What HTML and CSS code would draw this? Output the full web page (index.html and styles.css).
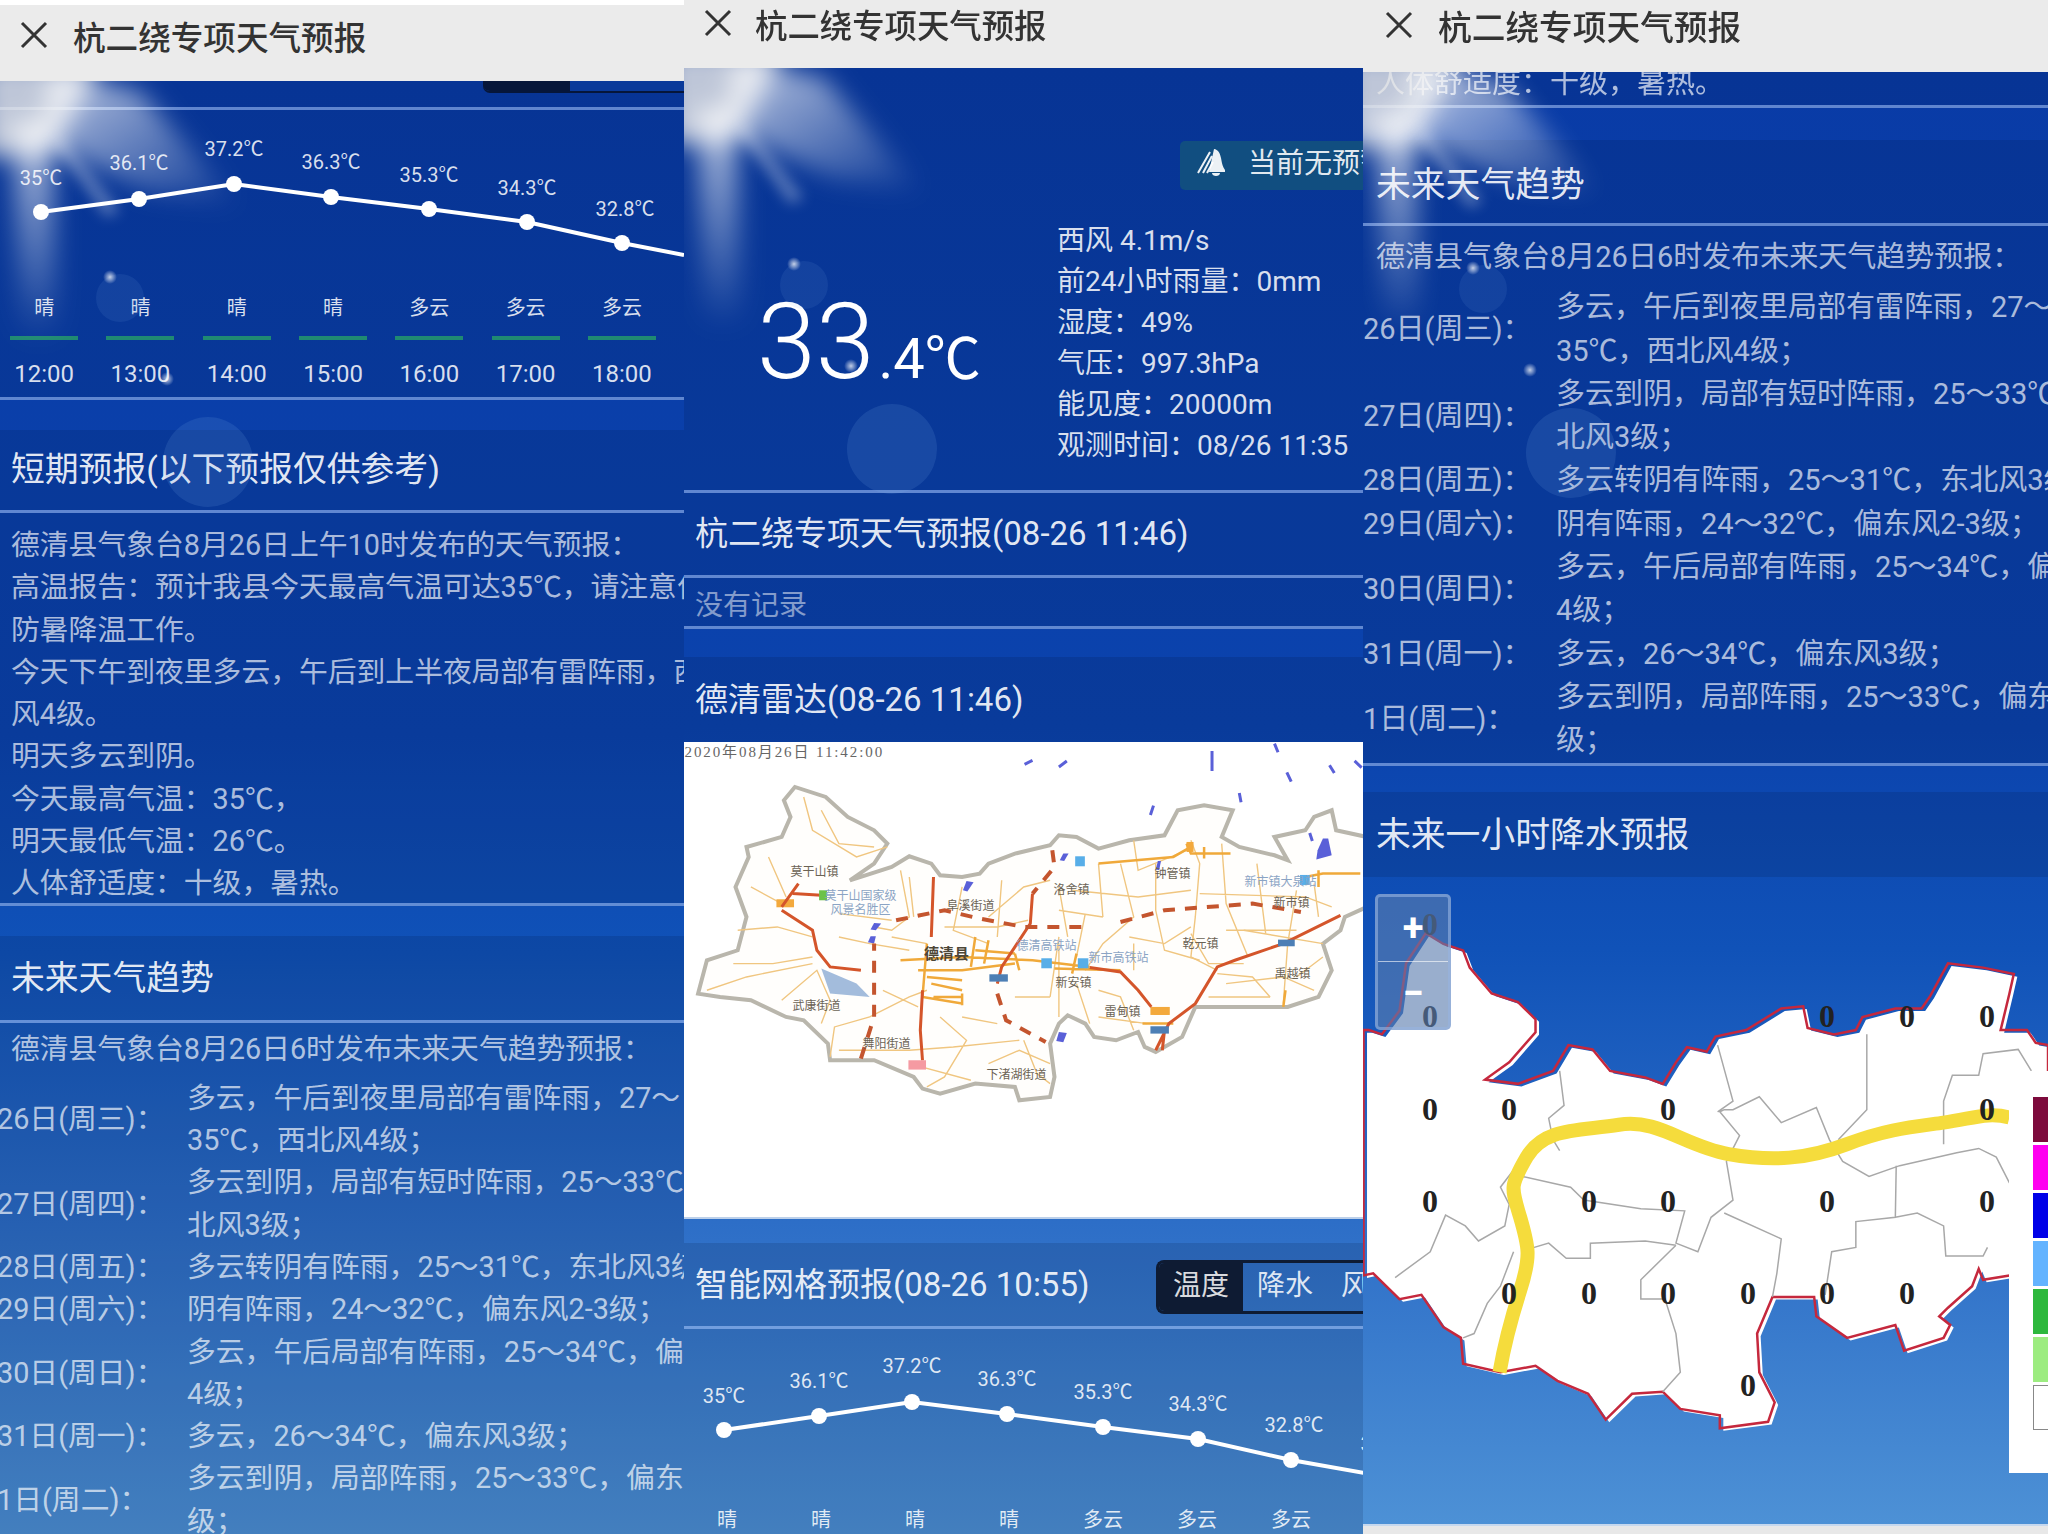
FILE: index.html
```html
<!DOCTYPE html>
<html lang="zh-CN">
<head>
    <meta charset="UTF-8">
    <title>杭二绕专项天气预报</title>
    <link rel="stylesheet" href="styles.css">
</head>
<body>
    <svg class="defs" width="0" height="0">
        <defs>
            <filter id="soft" x="-40%" y="-40%" width="180%" height="180%"><feGaussianBlur stdDeviation="12"/></filter>
            <filter id="softer" x="-40%" y="-40%" width="180%" height="180%"><feGaussianBlur stdDeviation="7"/></filter>
            <linearGradient id="rayDown" x1="0" y1="0" x2="0" y2="1">
                <stop offset="0" stop-color="#fff" stop-opacity=".7"/>
                <stop offset="1" stop-color="#fff" stop-opacity="0"/>
            </linearGradient>
            <linearGradient id="rayRight" x1="0" y1="0" x2="1" y2="1">
                <stop offset="0" stop-color="#fff" stop-opacity=".75"/>
                <stop offset="1" stop-color="#fff" stop-opacity="0"/>
            </linearGradient>
            <symbol id="flare" viewBox="0 0 300 320">
                <g filter="url(#soft)">
                    <polygon points="-20,-20 100,-20 80,22 50,75 -20,75" fill="#e6e6e6" opacity=".82"/>
                    <polygon points="50,-10 140,10 240,125 150,110 40,60" fill="url(#rayRight)"/>
                    <polygon points="12,40 52,40 58,260 20,260" fill="url(#rayDown)"/>
                </g>
                <g filter="url(#softer)" opacity=".3">
                    <polygon points="50,60 62,54 120,130 106,136" fill="#fff"/>
                </g>
            </symbol>
        </defs>
    </svg>

    <div class="screens">

        <!-- 左：滚动到预报 -->
        <section class="panel p1">
            <header class="topbar">
                <svg class="close" viewBox="0 0 30 30"><path d="M3 3 27 27M27 3 3 27"/></svg>
                <span>杭二绕专项天气预报</span>
            </header>
            <div class="content">
                <div class="fx">
                    <svg class="flare"><use href="#flare"/></svg>
                    <i class="bubble big"></i><i class="bubble small"></i><i class="dot d1"></i><i class="dot d2"></i>
                </div>
                <div class="sec stub-row">
                    <div class="stub"><i></i></div>
                </div>
                <div class="sec chart">
                    <svg class="curve" width="684" height="170">
                        <polyline points="41,102 139,89 234,74 331,87 429,99 527,112 622,133 684,145"/>
                        <circle cx="41" cy="102" r="8"/><circle cx="139" cy="89" r="8"/><circle cx="234" cy="74" r="8"/><circle cx="331" cy="87" r="8"/><circle cx="429" cy="99" r="8"/><circle cx="527" cy="112" r="8"/><circle cx="622" cy="133" r="8"/>
                        <text x="41" y="75">35℃</text><text x="139" y="60">36.1℃</text><text x="234" y="46">37.2℃</text><text x="331" y="59">36.3℃</text><text x="429" y="72">35.3℃</text><text x="527" y="85">34.3℃</text><text x="625" y="106">32.8℃</text>
                    </svg>
                    <div class="hours">
                        <div class="hour"><span>晴</span><i></i><b>12:00</b></div>
                        <div class="hour"><span>晴</span><i></i><b>13:00</b></div>
                        <div class="hour"><span>晴</span><i></i><b>14:00</b></div>
                        <div class="hour"><span>晴</span><i></i><b>15:00</b></div>
                        <div class="hour"><span>多云</span><i></i><b>16:00</b></div>
                        <div class="hour"><span>多云</span><i></i><b>17:00</b></div>
                        <div class="hour"><span>多云</span><i></i><b>18:00</b></div>
                    </div>
                </div>
                <div class="band"></div>
                <div class="sec title">短期预报(以下预报仅供参考)</div>
                <div class="sec text short">
                    德清县气象台8月26日上午10时发布的天气预报：<br>
                    高温报告：预计我县今天最高气温可达35℃，请注意作好<br>
                    防暑降温工作。<br>
                    今天下午到夜里多云，午后到上半夜局部有雷阵雨，西北<br>
                    风4级。<br>
                    明天多云到阴。<br>
                    今天最高气温：35℃，<br>
                    明天最低气温：26℃。<br>
                    人体舒适度：十级，暑热。
                </div>
                <div class="band"></div>
                <div class="sec title trend">未来天气趋势</div>
                <div class="sec text long">
                    <p>德清县气象台8月26日6时发布未来天气趋势预报：</p>
                    <div class="days">
                        <span>26日(周三)：</span><div>多云，午后到夜里局部有雷阵雨，27～<br>35℃，西北风4级；</div>
                        <span>27日(周四)：</span><div>多云到阴，局部有短时阵雨，25～33℃，西<br>北风3级；</div>
                        <span>28日(周五)：</span><div>多云转阴有阵雨，25～31℃，东北风3级；</div>
                        <span>29日(周六)：</span><div>阴有阵雨，24～32℃，偏东风2-3级；</div>
                        <span>30日(周日)：</span><div>多云，午后局部有阵雨，25～34℃，偏东风<br>4级；</div>
                        <span>31日(周一)：</span><div>多云，26～34℃，偏东风3级；</div>
                        <span>1日(周二)：</span><div>多云到阴，局部阵雨，25～33℃，偏东风3<br>级；</div>
                    </div>
                </div>
            </div>
        </section>

        <!-- 中：实况 + 雷达 -->
        <section class="panel p2">
            <header class="topbar">
                <svg class="close" viewBox="0 0 30 30"><path d="M3 3 27 27M27 3 3 27"/></svg>
                <span>杭二绕专项天气预报</span>
            </header>
            <div class="content">
                <div class="fx">
                    <svg class="flare"><use href="#flare"/></svg>
                    <i class="bubble big"></i><i class="bubble small"></i><i class="dot d1"></i><i class="dot d2"></i>
                </div>
                <div class="sec hero">
                    <div class="alert">
                        <svg viewBox="0 0 32 32"><path class="bell" d="M19 4c4 .5 6 4 7 9 1 6 2 9 4 12v2H14z"/><path class="bell" d="M17 28h8c0 4-8 4-8 0z"/><path class="slash" d="M3 28 15 7M8 28 17 11M12 28 18 17"/></svg>
                        <span>当前无预警</span>
                    </div>
                    <div class="now">
                        <div class="temp">33<small>.4℃</small></div>
                        <div class="facts">
                            西风 4.1m/s<br>
                            前24小时雨量：0mm<br>
                            湿度：49%<br>
                            气压：997.3hPa<br>
                            能见度：20000m<br>
                            观测时间：08/26 11:35
                        </div>
                    </div>
                </div>
                <div class="sec title road">杭二绕专项天气预报(08-26 11:46)</div>
                <div class="sec none">没有记录</div>
                <div class="band"></div>
                <div class="sec title radar">德清雷达(08-26 11:46)</div>
                <div class="radar-map">
                    <svg width="680" height="475" viewBox="3.5 11.7 680 475">
                        <g transform="scale(.44 .3333)">
                            <polygon class="county" points="40,790 60,690 130,660 150,560 125,470 155,380 150,350 230,320 250,260 235,210 260,170 330,200 380,260 440,300 470,340 440,400 385,450 480,410 520,378 570,400 590,435 640,440 680,430 700,400 760,370 840,345 860,315 900,320 950,355 1020,330 1100,315 1130,240 1190,225 1255,240 1230,320 1270,350 1350,375 1380,390 1350,320 1420,300 1440,260 1480,240 1490,300 1560,320 1560,530 1510,560 1500,600 1460,640 1480,720 1450,800 1380,830 1210,830 1170,830 1140,920 1080,965 1055,950 1040,905 990,930 940,920 920,880 880,855 860,880 840,940 850,1040 840,1100 770,1110 760,1070 670,1060 590,1090 550,1075 530,1040 440,990 340,990 335,940 280,870 240,860 160,810 90,800"/>
                            <polygon class="lake" points="320,715 400,760 430,800 340,790"/>
                            <g class="minor">
                                <path d="M280 200 300 300 400 380 470 350M320 240 360 340 440 350M160 470 230 520M200 380 240 500M120 700 210 700 300 680M60 780 150 740 300 700M230 810 310 720 340 810 320 880M130 600 220 590 300 620"/>
                                <path d="M500 420 520 560 480 600 440 590M360 550 480 570M520 440 530 560M640 470 620 600 700 640M730 450 720 620M700 560 780 470 840 450M600 590 720 590 790 570M480 620 560 640M360 620 430 640 520 660"/>
                                <path d="M860 470 880 620M860 620 840 800M920 550 900 680M1000 400 1030 560 960 640 920 720M1030 330 1040 420 1150 360M1160 330 1180 400 1170 560 1160 680 1220 720M950 400 960 560M890 480 1040 500 1160 480M860 540 960 560M1030 640 1030 720"/>
                                <path d="M1230 340 1240 520 1290 680M1310 400 1330 610M1400 480 1380 640 1370 820M1440 460 1450 560M1080 400 1080 540 1100 660 1180 690M1020 620 1100 640 1160 590M1180 490 1420 500 1480 530M1240 600 1400 600M1240 760 1370 740 1440 780M1200 800 1340 800"/>
                                <path d="M340 980 350 890 430 860 520 800 560 780M360 960 520 960 620 950 770 930M590 860 650 930 600 1040 560 1070M700 1000 770 960 840 1000M780 930 810 1030 840 1060M520 1000 660 1050M460 780 540 830M640 860 720 880M760 800 840 800"/>
                                <path d="M900 760 930 880M860 640 860 860M950 780 1000 800 1030 900M1220 730 1300 740 1340 800M1400 740 1460 680M1280 600 1460 640M1160 610 1200 700 1280 700M950 860 1060 880"/>
                            </g>
                            <g class="echo">
                                <path d="M782 102 800 90M860 110 878 92M1208 62V122M1350 40 1358 66M1378 126 1388 154M1475 105 1486 128M1532 92 1548 112M1270 188 1274 216M1075 226 1068 254M1430 308 1436 332"/>
                                <polygon points="1460,325 1472,325 1480,375 1445,388 1448,360"/>
                                <polygon points="870,370 882,370 872,392 862,390"/>
                                <polygon points="650,452 666,456 652,484 642,480"/>
                                <polygon points="440,578 456,580 444,600 432,598"/>
                                <polygon points="432,618 444,618 440,640 426,636"/>
                                <polygon points="860,905 878,908 870,936 854,932"/>
                                <polygon points="1085,392 1092,392 1088,420 1080,418"/>
                            </g>
                            <g class="main">
                                <path d="M500 690 640 680 800 690 930 710M540 720 640 720 760 700M560 640 550 800 640 820M570 760 640 780M575 800H640M640 790V825M670 620 660 710M700 630 690 700M760 670 770 720M900 670 890 730M850 715 1000 720M1150 340 1160 370 1250 370M1160 350 1120 380 950 400M1450 420 1450 470M1420 440 1460 430 1545 430"/>
                                <path d="M1075 850H1110M1050 880H1120M1375 780 1370 830M230 520H255M1190 350 1190 385M560 740 640 750M670 660 760 670"/>
                            </g>
                            <rect class="town" x="218" y="507" width="40" height="24"/>
                            <rect class="town" x="1068" y="830" width="44" height="24"/>
                            <rect class="town" x="1150" y="335" width="16" height="30"/>
                            <g class="red">
                                <path d="M230 530 268 460M255 490 320 495M230 540 300 600 310 660 340 710 410 720M800 490 795 580 730 710 720 760"/>
                                <path d="M1500 555 1370 640 1260 690 1220 710 1170 820 1110 880 1080 960M1095 960 1100 900"/>
                                <path d="M575 440 570 620M550 780 545 900 550 990M930 712 1000 725 1040 780 1070 830"/>
                            </g>
                            <g class="dash">
                                <path d="M410 985 440 860 440 640M490 570 600 540 680 565 780 590 920 590M1000 575 1100 540 1300 520 1410 545M845 360 850 410 800 490M720 790 740 870 830 935"/>
                            </g>
                            <rect class="shield" x="702" y="732" width="42" height="22"/>
                            <rect class="shield" x="1358" y="628" width="38" height="20"/>
                            <rect class="shield" x="1068" y="888" width="42" height="22"/>
                            <rect class="toll" x="518" y="990" width="40" height="28"/>
                            <rect class="station" x="897" y="378" width="22" height="30"/>
                            <rect class="station" x="820" y="684" width="24" height="30"/>
                            <rect class="station" x="903" y="684" width="24" height="30"/>
                            <rect class="station" x="1408" y="434" width="22" height="30"/>
                            <rect class="park" x="315" y="480" width="18" height="30"/>
                        </g>
                        <text class="stamp" x="4" y="27">2020年08月26日 11:42:00</text>
                        <g class="place">
                            <text x="134" y="146">莫干山镇</text>
                            <text x="180" y="170" class="blue">莫干山国家级</text>
                            <text x="180" y="184" class="blue">风景名胜区</text>
                            <text x="290" y="180">阜溪街道</text>
                            <text x="391" y="164">洛舍镇</text>
                            <text x="492" y="148">钟管镇</text>
                            <text x="600" y="156" class="blue">新市镇大泉站</text>
                            <text x="611" y="177">新市镇</text>
                            <text x="520" y="218">乾元镇</text>
                            <text x="612" y="248">禹越镇</text>
                            <text x="366" y="220" class="blue">德清高铁站</text>
                            <text x="438" y="232" class="blue">新市高铁站</text>
                            <text x="393" y="257">新安镇</text>
                            <text x="442" y="286">雷甸镇</text>
                            <text x="136" y="280">武康街道</text>
                            <text x="206" y="318">舞阳街道</text>
                            <text x="336" y="349">下渚湖街道</text>
                            <text class="city" x="266" y="229">德清县</text>
                        </g>
                    </svg>
                </div>
                <div class="band thin"></div>
                <div class="sec title grid-title">
                    <span>智能网格预报(08-26 10:55)</span>
                    <div class="toggle"><span class="on">温度</span><span>降水</span><span>风力</span></div>
                </div>
                <div class="sec chart">
                    <svg class="curve" width="680" height="163">
                        <polyline points="40,101 135,87 228,73 323,85 419,98 514,110 607,131 680,144"/>
                        <circle cx="40" cy="101" r="8"/><circle cx="135" cy="87" r="8"/><circle cx="228" cy="73" r="8"/><circle cx="323" cy="85" r="8"/><circle cx="419" cy="98" r="8"/><circle cx="514" cy="110" r="8"/><circle cx="607" cy="131" r="8"/>
                        <text x="40" y="74">35℃</text><text x="135" y="59">36.1℃</text><text x="228" y="44">37.2℃</text><text x="323" y="57">36.3℃</text><text x="419" y="70">35.3℃</text><text x="514" y="82">34.3℃</text><text x="610" y="103">32.8℃</text><text x="706" y="122">31.6℃</text>
                    </svg>
                    <div class="hours">
                        <div class="hour"><span>晴</span></div>
                        <div class="hour"><span>晴</span></div>
                        <div class="hour"><span>晴</span></div>
                        <div class="hour"><span>晴</span></div>
                        <div class="hour"><span>多云</span></div>
                        <div class="hour"><span>多云</span></div>
                        <div class="hour"><span>多云</span></div>
                    </div>
                </div>
            </div>
        </section>

        <!-- 右：趋势 + 降水图 -->
        <section class="panel p3">
            <header class="topbar">
                <svg class="close" viewBox="0 0 30 30"><path d="M3 3 27 27M27 3 3 27"/></svg>
                <span>杭二绕专项天气预报</span>
            </header>
            <div class="content">
                <div class="fx">
                    <svg class="flare"><use href="#flare"/></svg>
                    <i class="bubble big"></i><i class="bubble small"></i><i class="dot d1"></i><i class="dot d2"></i>
                </div>
                <div class="sec cut"><span>人体舒适度：十级，暑热。</span></div>
                <div class="band"></div>
                <div class="sec title">未来天气趋势</div>
                <div class="sec text long">
                    <p>德清县气象台8月26日6时发布未来天气趋势预报：</p>
                    <div class="days">
                        <span>26日(周三)：</span><div>多云，午后到夜里局部有雷阵雨，27～<br>35℃，西北风4级；</div>
                        <span>27日(周四)：</span><div>多云到阴，局部有短时阵雨，25～33℃，西<br>北风3级；</div>
                        <span>28日(周五)：</span><div>多云转阴有阵雨，25～31℃，东北风3级；</div>
                        <span>29日(周六)：</span><div>阴有阵雨，24～32℃，偏东风2-3级；</div>
                        <span>30日(周日)：</span><div>多云，午后局部有阵雨，25～34℃，偏东风<br>4级；</div>
                        <span>31日(周一)：</span><div>多云，26～34℃，偏东风3级；</div>
                        <span>1日(周二)：</span><div>多云到阴，局部阵雨，25～33℃，偏东风3<br>级；</div>
                    </div>
                </div>
                <div class="band tail"></div>
                <div class="sec title rain-title">未来一小时降水预报</div>
                <div class="rain-map">
                    <svg width="685" height="647">
                        <g transform="translate(-3 -17) scale(.4388 .4305)">
                            <polygon class="land-under" points="8,395 20,395 50,405 90,350 105,240 150,170 190,195 235,210 250,250 300,310 360,330 400,370 400,400 340,470 285,510 360,520 440,490 475,430 530,440 570,490 650,505 690,520 720,470 745,435 790,445 810,410 880,395 960,345 1010,340 1020,390 1080,405 1130,395 1145,365 1220,345 1280,345 1300,315 1340,240 1420,250 1490,265 1480,310 1460,395 1520,395 1540,425 1568,430 1568,960 1480,965 1420,975 1410,950 1395,990 1340,1040 1320,1060 1345,1080 1330,1110 1240,1140 1220,1080 1110,1110 1040,1060 1035,1015 940,1015 905,1100 910,1190 945,1260 930,1305 820,1320 820,1290 730,1275 690,1235 620,1240 560,1300 520,1240 450,1210 400,1175 320,1190 235,1170 230,1110 190,1085 140,1010 90,1020 30,960 8,965"/>
                            <polygon class="land" points="8,395 20,395 50,405 90,350 105,240 150,170 190,195 235,210 250,250 300,310 360,330 400,370 400,400 340,470 285,510 360,520 440,490 475,430 530,440 570,490 650,505 690,520 720,470 745,435 790,445 810,410 880,395 960,345 1010,340 1020,390 1080,405 1130,395 1145,365 1220,345 1280,345 1300,315 1340,240 1420,250 1490,265 1480,310 1460,395 1520,395 1540,425 1568,430 1568,960 1480,965 1420,975 1410,950 1395,990 1340,1040 1320,1060 1345,1080 1330,1110 1240,1140 1220,1080 1110,1110 1040,1060 1035,1015 940,1015 905,1100 910,1190 945,1260 930,1305 820,1320 820,1290 730,1275 690,1235 620,1240 560,1300 520,1240 450,1210 400,1175 320,1190 235,1170 230,1110 190,1085 140,1010 90,1020 30,960 8,965"/>
                            <path class="town-line" d="M455 490 465 570 430 600 440 650 455 675M350 720 320 760 340 800 330 850 270 885 240 850 195 825 160 910 80 970M370 735 480 760 510 790 640 810 740 815 720 890 770 910 800 830 850 790 835 700 865 640 820 585 830 580 850 580 910 550 960 610 1040 575 1070 650 1100 700 1160 735 1230 710 1360 680 1410 670 1450 690 1480 750M815 430 850 560 815 585M1155 405 1155 580 1090 650M1530 490 1500 440 1420 450 1410 500 1350 500 1330 560 1330 660M1222 710 1220 830 1130 840 1130 900 1075 910 1060 1010M1220 830 1270 820 1330 850 1335 920 1420 920 1430 900M830 820 960 880 950 960 940 1015M380 905 430 890 470 925 525 925 525 890 650 885 720 895M720 895 640 975 640 1020 695 1020 720 1100 730 1190 690 1235M350 910 320 990 290 1030 260 1100 235 1110"/>
                            <path class="route" d="M318 1190C328 1130 340 1080 365 1000S385 900 365 830 340 760 380 690 500 630 590 615 740 665 840 683 1020 695 1110 660 1260 620 1330 610 1430 585 1480 598"/>
                        </g>
                        <g class="zero">
                            <text x="67" y="58">0</text><text x="67" y="150">0</text>
                            <text x="464" y="150">0</text><text x="544" y="150">0</text><text x="624" y="150">0</text>
                            <text x="67" y="243">0</text><text x="146" y="243">0</text><text x="305" y="243">0</text><text x="624" y="243">0</text>
                            <text x="67" y="335">0</text><text x="226" y="335">0</text><text x="305" y="335">0</text><text x="464" y="335">0</text><text x="624" y="335">0</text>
                            <text x="146" y="427">0</text><text x="226" y="427">0</text><text x="305" y="427">0</text><text x="385" y="427">0</text><text x="464" y="427">0</text><text x="544" y="427">0</text>
                            <text x="385" y="519">0</text>
                        </g>
                    </svg>
                    <div class="zoom-ctl"><span>+</span><span>−</span></div>
                    <div class="legend"><i class="c1"></i><i class="c2"></i><i class="c3"></i><i class="c4"></i><i class="c5"></i><i class="c6"></i><i class="c7"></i></div>
                </div>
                <div class="foot"></div>
            </div>
        </section>
    </div>
</body>
</html>
```

FILE: styles.css
```css
* {
    box-sizing: border-box;
}

body {
    margin: 0;
    width: 2048px;
    height: 1534px;
    overflow: hidden;
    background: white;
    font-family: Roboto, "Noto Sans CJK SC", sans-serif;
}

.defs {
    position: absolute;
}

.screens {
    display: grid;
    grid-template-columns: 684px 679px 685px;
    height: 1534px;
    filter: blur(0.5px);
}

.panel {
    display: flex;
    flex-direction: column;
    overflow: hidden;
    min-width: 0;
}

.p1 {
    margin-top: 5px;
}

/* title bar */
.topbar {
    display: flex;
    align-items: center;
    gap: 24px;
    flex: none;
    padding-left: 19px;
    padding-bottom: 16px;
    background: #ebebeb;
    color: #333;
    font-size: 32.6px;
    font-weight: 500;
    white-space: nowrap;
}

.p1 .topbar { height: 76px; }
.p2 .topbar { height: 68px; padding-bottom: 22px; gap: 22px; font-size: 32.4px; }
.p3 .topbar { height: 72px; padding-left: 21px; padding-bottom: 22px; font-size: 33.7px; }

.close {
    width: 30px;
    height: 30px;
    flex: none;
}

.close path {
    fill: none;
    stroke: #333;
    stroke-width: 3;
}

/* scrolled page with the fixed sky behind it */
.content {
    position: relative;
    flex: 1;
    overflow: hidden;
    white-space: nowrap;
    color: rgba(255,255,255,0.9);
    background: linear-gradient(180deg, #093ba6 0%, #0b43ad 45%, #1052b8 60%, #2f70c8 80%, #4e92d6 100%);
}

.fx {
    position: absolute;
    inset: 0;
    z-index: 2;
    pointer-events: none;
}

.flare {
    position: absolute;
    left: 0;
    top: 0;
    width: 300px;
    height: 320px;
}

.bubble, .dot {
    position: absolute;
    border-radius: 50%;
}

.bubble {
    background: rgba(130,175,235,0.14);
}

.bubble.big { left: 163px; top: 336px; width: 90px; height: 90px; }
.bubble.small { left: 96px; top: 193px; width: 48px; height: 48px; background: rgba(130,175,235,0.1); }

.dot {
    width: 14px;
    height: 14px;
    background: radial-gradient(circle, rgba(255,255,255,0.75) 0%, rgba(255,255,255,0) 70%);
}

.dot.d1 { left: 103px; top: 189px; }
.dot.d2 { left: 160px; top: 291px; }

.sec {
    background: rgba(0,15,50,0.14);
    border-bottom: 3px solid rgba(170,200,255,0.55);
}

.band {
    height: 30px;
}

.title {
    display: flex;
    align-items: center;
    height: 83px;
    padding-left: 11px;
    padding-bottom: 7px;
    font-size: 33.8px;
}

.text {
    padding-left: 11px;
    font-size: 28.8px;
    line-height: 42.3px;
    color: rgba(255,255,255,0.68);
}

.text p {
    margin: 0 0 6.5px;
}

.days {
    display: grid;
    grid-template-columns: 190px 1fr;
    align-items: center;
    margin-left: -14px;
}

/* panel 1 heights */
.stub-row {
    height: 29px;
}

.stub {
    position: relative;
    width: 201px;
    height: 12px;
    margin-left: auto;
    background: #0a3a9a;
    border-bottom: 2px solid #06163a;
    border-radius: 0 0 0 7px;
    overflow: hidden;
}

.stub i {
    display: block;
    width: 87px;
    height: 12px;
    background: #06163a;
}

.short {
    height: 393px;
    padding-top: 11px;
}

.p1 .title.trend {
    height: 87px;
    padding-bottom: 6px;
}

.p1 .long {
    padding-top: 5px;
    border-bottom: 0;
}

/* temperature curve */
.chart {
    height: 290px;
}

.curve {
    display: block;
}

.curve polyline {
    fill: none;
    stroke: white;
    stroke-width: 4;
}

.curve circle {
    fill: white;
}

.curve text {
    font-size: 20px;
    text-anchor: middle;
    fill: rgba(255,255,255,0.85);
}

.hours {
    display: grid;
    grid-template-columns: repeat(7, 96.3px);
    margin-left: -4px;
    margin-top: 13px;
}

.hour {
    display: flex;
    flex-direction: column;
    align-items: center;
    color: rgba(255,255,255,0.85);
}

.hour span {
    font-size: 20px;
    line-height: 30px;
}

.hour i {
    width: 68px;
    height: 4px;
    margin-top: 13px;
    background: #1f8a72;
}

.hour b {
    font-size: 24px;
    font-weight: 400;
    line-height: 34px;
    margin-top: 17px;
}

/* panel 2 */
.hero {
    height: 425px;
}

.alert {
    display: flex;
    align-items: center;
    gap: 21px;
    width: 183px;
    height: 49px;
    margin-left: auto;
    padding-left: 15px;
    padding-bottom: 9px;
    overflow: hidden;
    font-size: 28px;
    border-radius: 5px 0 0 5px;
    background: #114e80;
}

.hero .alert {
    position: relative;
    top: 73px;
}

.alert svg {
    width: 32px;
    height: 32px;
    flex: none;
}

.bell {
    fill: rgba(255,255,255,0.92);
}

.slash {
    fill: none;
    stroke: rgba(255,255,255,0.92);
    stroke-width: 2;
}

.now {
    display: flex;
    padding-left: 73px;
    margin-top: 103px;
}

.temp {
    width: 300px;
    padding-top: 69px;
    font-size: 106px;
    font-weight: 300;
    line-height: 106px;
    color: white;
}

.temp small {
    margin-left: 4px;
    font-size: 56px;
    font-weight: 400;
}

.facts {
    font-size: 28px;
    line-height: 41px;
    color: rgba(255,255,255,0.85);
}

.title.road {
    height: 85px;
}

.none {
    height: 51px;
    padding-left: 11px;
    font-size: 28px;
    line-height: 56px;
    color: rgba(255,255,255,0.5);
}

.p2 .band {
    height: 28px;
}

.p2 .title {
    font-size: 33px;
}

.title.radar {
    height: 85px;
    padding-bottom: 5px;
    border-bottom: 0;
}

.radar-map {
    height: 475px;
    background: white;
}

.radar-map svg {
    display: block;
}

.echo path {
    fill: none;
    stroke: #5a60d8;
    stroke-width: 3;
    vector-effect: non-scaling-stroke;
}

.echo polygon {
    fill: #5a60d8;
}

.county {
    fill: #fffefc;
    stroke: #b9b6ac;
    stroke-width: 4;
    vector-effect: non-scaling-stroke;
}

.lake {
    fill: #a3bcdc;
}

.minor path, .main path, .red path, .dash path {
    fill: none;
    vector-effect: non-scaling-stroke;
}

.minor path {
    stroke: #f0c680;
    stroke-width: 1.4;
}

.main path {
    stroke: #f0a93a;
    stroke-width: 2.5;
}

.red path {
    stroke: #d4552a;
    stroke-width: 3;
}

.dash path {
    stroke: #c4552e;
    stroke-width: 4;
    stroke-dasharray: 12 10;
}

.town { fill: #f3a93c; }
.shield { fill: #4d7fb5; }
.toll { fill: #f59aa2; }
.station { fill: #58aee8; }
.park { fill: #6cc24a; }

.stamp {
    font-family: "Liberation Serif", "Noto Sans CJK SC", serif;
    font-size: 15px;
    letter-spacing: 1.9px;
    fill: #666;
}

.place text {
    font-size: 12px;
    text-anchor: middle;
    fill: #6b6355;
}

.place text.blue {
    fill: #8ba4c4;
}

.place text.city {
    font-size: 15px;
    font-weight: 700;
    fill: #4d4636;
}

.band.thin {
    height: 26px;
    border-top: 2px solid #bcd0ea;
}

.grid-title {
    height: 86px;
    padding-bottom: 0;
}

.grid-title > span {
    padding-bottom: 5px;
}

.toggle {
    display: flex;
    flex: none;
    width: 207px;
    height: 54px;
    margin-left: auto;
    margin-top: 4px;
    overflow: hidden;
    border: 3px solid #0e1b33;
    border-right: 0;
    border-radius: 8px 0 0 8px;
    font-size: 28px;
    line-height: 46px;
    color: rgba(255,255,255,0.85);
}

.toggle span {
    flex: none;
    width: 84px;
    text-align: center;
}

.toggle .on {
    background: #0e1b33;
}

.p2 .chart {
    height: 210px;
    border-bottom: 0;
}

.p2 .hours {
    grid-template-columns: repeat(7, 94px);
}

/* panel 3 */
.p3 .title {
    height: 86px;
    padding-left: 13px;
    padding-bottom: 0;
    font-size: 34.8px;
}

.p3 .band { height: 32px; }
.p3 .band.tail { height: 26px; }

.cut {
    display: flex;
    align-items: flex-end;
    height: 36px;
    padding-left: 13px;
    font-size: 29px;
    line-height: 43.3px;
    color: rgba(255,255,255,0.68);
    overflow: hidden;
}

.p3 .long {
    padding-top: 10px;
    padding-left: 13px;
    font-size: 29px;
    line-height: 43.3px;
}

.p3 .long p { margin-bottom: 7px; }
.p3 .days { grid-template-columns: 193px 1fr; margin-left: -13px; }

.title.rain-title {
    height: 85px;
    padding-bottom: 4px;
    border-bottom: 0;
}

.rain-map {
    position: relative;
    height: 647px;
    overflow: hidden;
}

.rain-map svg {
    display: block;
}

.land {
    fill: none;
    stroke: #c5283d;
    stroke-width: 2.5;
    vector-effect: non-scaling-stroke;
}

.land-under {
    fill: white;
    transform: translate(8px, 6px);
}

.town-line {
    fill: none;
    stroke: #a8a8a8;
    stroke-width: 1.5;
    vector-effect: non-scaling-stroke;
}

.route {
    fill: none;
    stroke: #f5dc3c;
    stroke-width: 14;
    stroke-linejoin: round;
    vector-effect: non-scaling-stroke;
}

.zero text {
    font-family: "Liberation Serif", serif;
    font-size: 32px;
    font-weight: 700;
    text-anchor: middle;
    fill: #222;
}

.zoom-ctl {
    position: absolute;
    left: 12px;
    top: 17px;
    display: flex;
    flex-direction: column;
    width: 76px;
    height: 136px;
    border: 3px solid rgba(150,180,225,0.6);
    border-radius: 5px;
    background: rgba(90,125,175,0.62);
    color: white;
    font-size: 38px;
    font-weight: 700;
    text-align: center;
}

.zoom-ctl span {
    flex: 1;
    line-height: 62px;
}

.zoom-ctl span + span {
    border-top: 1px solid rgba(255,255,255,0.6);
}

.legend {
    position: absolute;
    left: 646px;
    top: 194px;
    display: flex;
    flex-direction: column;
    gap: 3px;
    width: 39px;
    height: 402px;
    padding: 26px 0 0 24px;
    background: white;
}

.legend i {
    display: block;
    height: 45px;
}

.c1 { background: #7d0a3c; }
.c2 { background: #ff00f0; }
.c3 { background: #0000e8; }
.c4 { background: #63b3ff; }
.c5 { background: #2db83d; }
.c6 { background: #9cec80; }
.c7 { background: white; border: 1px solid #888; border-right: 0; }

.foot {
    height: 10px;
    background: #e8e8e8;
    border-top: 2px solid #c6d8ee;
}
```
